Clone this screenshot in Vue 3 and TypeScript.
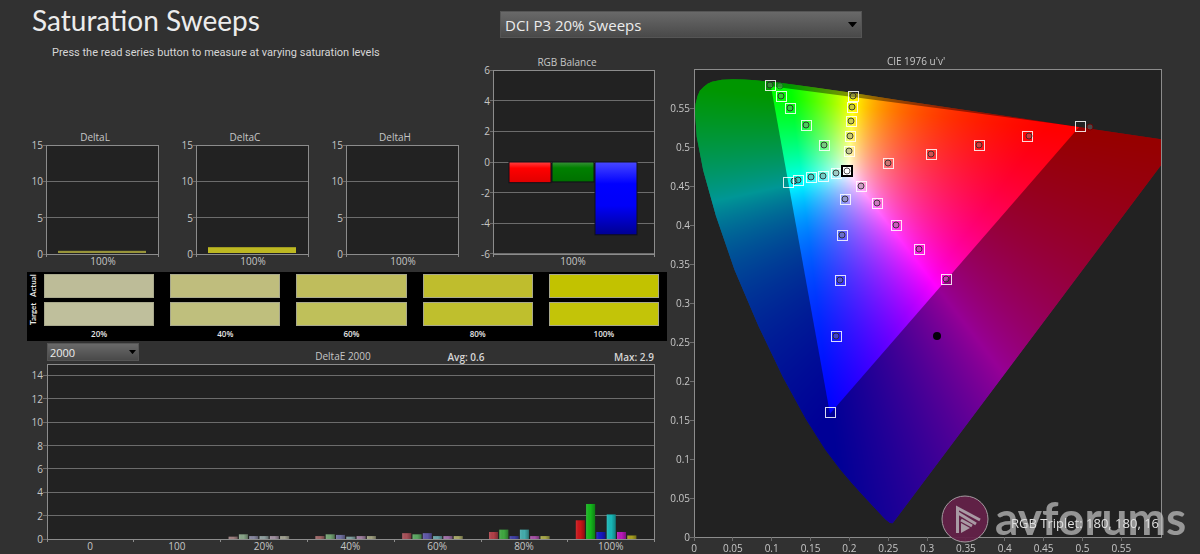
<script setup lang="ts">
import { onMounted, ref } from 'vue'

interface Swatch { label: string; actual: string; target: string }
interface Delta { title: string; value: number; fill: string }
interface Marker { x: number; y: number; square?: boolean; circle?: boolean; dx?: number; tint?: string }

const sweep = ref('DCI P3 20% Sweeps')
const formula = ref('2000')

const deltas: Delta[] = [
  { title: 'DeltaL', value: 0.3, fill: '#98943a' },
  { title: 'DeltaC', value: 0.8, fill: '#bdb822' },
  { title: 'DeltaH', value: 0, fill: '#bdb822' },
]
const deltaTicks = [15, 10, 5, 0]
const deltaY = (v: number) => 126 - v * 7.26

const rgbTicks = [6, 4, 2, 0, -2, -4, -6]
const rgbY = (v: number) => 118 - v * 15.33
const rgbBars = [
  { x: 33, value: -1.35, fill: 'url(#rgbRed)' },
  { x: 76, value: -1.3, fill: 'url(#rgbGreen)' },
  { x: 119, value: -4.75, fill: 'url(#rgbBlue)' },
]

const swatches: Swatch[] = [
  { label: '20%', actual: '#bdbc98', target: '#bfbf9c' },
  { label: '40%', actual: '#bfbd7d', target: '#bfbf7d' },
  { label: '60%', actual: '#bfbd5c', target: '#bfc05a' },
  { label: '80%', actual: '#bfbd2d', target: '#bfbf2d' },
  { label: '100%', actual: '#c2c200', target: '#c3c408' },
]

const errTicks = [14, 12, 10, 8, 6, 4, 2, 0]
const errY = (v: number) => 176 - v * 11.68
const groupWidth = 86.8
const groups = [
  { label: '0', bars: [], colors: [] },
  { label: '100', bars: [], colors: [] },
  { label: '20%', bars: [0.2, 0.4, 0.25, 0.25, 0.25, 0.25], colors: ['#a08080', '#88a488', '#8888a0', '#90a0a0', '#a090a0', '#a0a090'] },
  { label: '40%', bars: [0.25, 0.4, 0.35, 0.2, 0.25, 0.25], colors: ['#a06868', '#74a474', '#7070a0', '#80a0a0', '#a080a0', '#a0a080'] },
  { label: '60%', bars: [0.5, 0.4, 0.5, 0.25, 0.25, 0.25], colors: ['#a85058', '#5ca862', '#6058a8', '#6aa4a8', '#a070a8', '#a8a868'] },
  { label: '80%', bars: [0.6, 0.8, 0.25, 0.8, 0.25, 0.25], colors: ['#b04048', '#40a840', '#4040a8', '#44acac', '#a850a8', '#a8a848'] },
  { label: '100%', bars: [1.6, 3, 0.6, 2.1, 0.6, 0.3], colors: ['#cc1418', '#14b81c', '#1818c4', '#18b8b8', '#b818b8', '#a8a020'] },
]

const originX = 26
const originY = 493
const scaleU = 777
const scaleV = 780
const uTicks = ['0', '0.05', '0.1', '0.15', '0.2', '0.25', '0.3', '0.35', '0.4', '0.45', '0.5', '0.55']

const locus: [number, number][] = [
  [0.2557, 0.0175], [0.2522, 0.0178], [0.2461, 0.0226], [0.2347, 0.035], [0.2161, 0.0549],
  [0.2033, 0.0688], [0.1877, 0.0871], [0.169, 0.1119], [0.1441, 0.151], [0.1147, 0.2044],
  [0.0828, 0.2708], [0.0521, 0.3427], [0.0282, 0.4117], [0.0119, 0.4698], [0.0035, 0.5131],
  [0.0014, 0.5432], [0.002, 0.555], [0.0046, 0.5655], [0.0075, 0.572], [0.0123, 0.577],
  [0.0175, 0.581], [0.0231, 0.5837], [0.036, 0.5861],
  [0.0501, 0.5868], [0.0643, 0.5865], [0.0792, 0.5856], [0.1127, 0.5821], [0.1531, 0.5766],
  [0.2026, 0.5694], [0.2623, 0.5604], [0.3315, 0.5501], [0.4035, 0.5393], [0.4691, 0.5296],
  [0.5203, 0.5219], [0.6234, 0.5065],
]
const gamut: [number, number][] = [[0.099, 0.578], [0.496, 0.526], [0.175, 0.158]]

const markers: Marker[] = [
  { x: 102, y: 41, square: true, circle: true },
  { x: 112, y: 42, circle: true, tint: '#0a7a1a' },
  { x: 113, y: 52, square: true, circle: true },
  { x: 122, y: 64, square: true, circle: true },
  { x: 138, y: 81, square: true, circle: true },
  { x: 156, y: 101, square: true, circle: true },
  { x: 185, y: 52, square: true, circle: true },
  { x: 184, y: 63, square: true, circle: true },
  { x: 183, y: 77, square: true, circle: true },
  { x: 182, y: 92, square: true, circle: true },
  { x: 181, y: 107, square: true, circle: true },
  { x: 120, y: 138, square: true },
  { x: 126, y: 137, circle: true },
  { x: 130, y: 136, square: true, circle: true },
  { x: 143, y: 133, square: true, circle: true },
  { x: 155, y: 132, square: true, circle: true },
  { x: 168, y: 129, square: true, circle: true },
  { x: 220, y: 119, square: true, circle: true },
  { x: 263, y: 110, square: true, circle: true },
  { x: 311, y: 101, square: true, circle: true },
  { x: 359, y: 92, square: true, circle: true, dx: 2 },
  { x: 412, y: 82, square: true },
  { x: 422, y: 83, circle: true, tint: '#700000' },
  { x: 193, y: 142, square: true, circle: true },
  { x: 209, y: 159, square: true, circle: true },
  { x: 228, y: 181, square: true, circle: true },
  { x: 251, y: 205, square: true, circle: true },
  { x: 278, y: 235, square: true, circle: true },
  { x: 177, y: 155, square: true, circle: true },
  { x: 174, y: 191, square: true, circle: true },
  { x: 172, y: 236, square: true, circle: true },
  { x: 168, y: 292, square: true, circle: true },
  { x: 162, y: 368, square: true },
]

const diagram = ref<HTMLCanvasElement | null>(null)

function trace(ctx: CanvasRenderingContext2D, points: [number, number][]) {
  ctx.beginPath()
  for (const [u, v] of points) ctx.lineTo(originX + u * scaleU, originY - v * scaleV)
  ctx.closePath()
}

// Chromaticity to display colour, brightest channel scaled to full.
function colorAt(u: number, v: number): number[] {
  const x = (9 * u) / (6 * u - 16 * v + 12)
  const y = (4 * v) / (6 * u - 16 * v + 12)
  const z = 1 - x - y
  const rgb = [
    3.2406 * x - 1.5372 * y - 0.4986 * z,
    -0.9689 * x + 1.8758 * y + 0.0415 * z,
    0.0557 * x - 0.204 * y + 1.057 * z,
  ].map((c) => Math.max(0, c))
  const peak = Math.max(...rgb)
  return rgb.map((c) => (255 * c) / peak)
}

onMounted(() => {
  const canvas = diagram.value
  const ctx = canvas?.getContext('2d')
  if (!canvas || !ctx) return
  const { width, height } = canvas
  const layer = document.createElement('canvas')
  layer.width = width
  layer.height = height
  const layerCtx = layer.getContext('2d')!
  const image = layerCtx.createImageData(width, height)
  for (let py = 0; py < height; py++) {
    for (let px = 0; px < width; px++) {
      const c = colorAt((px - originX) / scaleU, (originY - py) / scaleV)
      const i = (py * width + px) * 4
      image.data[i] = c[0]
      image.data[i + 1] = c[1]
      image.data[i + 2] = c[2]
      image.data[i + 3] = 255
    }
  }
  layerCtx.putImageData(image, 0, 0)

  ctx.fillStyle = '#222'
  ctx.fillRect(originX, 25, 467, 468)
  ctx.beginPath()
  ctx.rect(originX, 25, 467, 468)
  ctx.clip()
  ctx.save()
  trace(ctx, locus)
  ctx.clip()
  ctx.drawImage(layer, 0, 0)
  ctx.fillStyle = 'rgba(0, 0, 0, 0.41)'
  ctx.fillRect(0, 0, width, height)
  trace(ctx, gamut)
  ctx.clip()
  ctx.drawImage(layer, 0, 0)
  ctx.restore()
})
</script>

<template>
  <main class="page">
    <h1>Saturation Sweeps</h1>

    <div class="sweep">
      <label class="picker">
        <select v-model="sweep" aria-label="Sweep series">
          <option>DCI P3 20% Sweeps</option>
        </select>
        <svg class="arrow" viewBox="0 0 10 6" aria-hidden="true"><path d="M0 0H10L5 6Z" /></svg>
      </label>
    </div>

    <section class="deltas">
      <p>Press the read series button to measure at varying saturation levels</p>
      <div class="delta-row">
        <svg v-for="d in deltas" :key="d.title" viewBox="0 0 150 144" role="img" :aria-label="d.title">
          <rect class="plot" x="20" y="17" width="112" height="109" />
          <g class="lines">
            <line v-for="t in deltaTicks" :key="t" x1="17" x2="132" :y1="deltaY(t)" :y2="deltaY(t)" />
            <path class="frame" d="M20 17V129M132 17V129M20 17H133M20 126H133" />
          </g>
          <rect v-if="d.value" x="32" width="88" :y="deltaY(d.value) - 1" :height="d.value * 7.26" :fill="d.fill" />
          <text x="69" y="13" class="mid">{{ d.title }}</text>
          <text v-for="t in deltaTicks" :key="t" x="17" :y="deltaY(t) + 4" class="end">{{ t }}</text>
          <text x="77" y="137" class="mid">100%</text>
        </svg>
      </div>
    </section>

    <svg class="balance" viewBox="0 0 192 228" role="img" aria-label="RGB Balance">
      <defs>
        <linearGradient id="rgbRed" x2="0" y2="1">
          <stop offset="0" stop-color="#ff4040" /><stop offset=".3" stop-color="#ff0000" /><stop offset="1" stop-color="#e00000" />
        </linearGradient>
        <linearGradient id="rgbGreen" x2="0" y2="1">
          <stop offset="0" stop-color="#389038" /><stop offset=".3" stop-color="#008000" /><stop offset="1" stop-color="#007000" />
        </linearGradient>
        <linearGradient id="rgbBlue" x2="0" y2="1">
          <stop offset="0" stop-color="#4848ff" /><stop offset=".3" stop-color="#0000ff" /><stop offset=".6" stop-color="#0000f8" /><stop offset="1" stop-color="#000090" />
        </linearGradient>
      </defs>
      <rect class="plot" x="17" y="26" width="161" height="184" />
      <g class="lines">
        <line v-for="t in rgbTicks" :key="t" x1="14" x2="178" :y1="rgbY(t)" :y2="rgbY(t)" />
        <path class="frame" d="M17 26V213M178 26V213M17 26H179M17 210H179" />
      </g>
      <rect v-for="b in rgbBars" :key="b.x" :x="b.x" y="118" width="42" :height="-b.value * 15.33" :fill="b.fill" stroke="#101018" />
      <text x="91" y="22" class="mid">RGB Balance</text>
      <text v-for="t in rgbTicks" :key="t" x="14" :y="rgbY(t) + 4" class="end">{{ t }}</text>
      <text x="97" y="221" class="mid">100%</text>
    </svg>

    <section class="swatches">
      <span class="side">Actual</span>
      <div v-for="s in swatches" :key="'a' + s.label" class="chip" :style="{ background: s.actual }"></div>
      <span class="side">Target</span>
      <div v-for="s in swatches" :key="'t' + s.label" class="chip" :style="{ background: s.target }"></div>
      <span></span>
      <span v-for="s in swatches" :key="'l' + s.label" class="percent">{{ s.label }}</span>
    </section>

    <section class="errors">
      <div class="error-head">
        <label class="picker small">
          <select v-model="formula" aria-label="DeltaE formula">
            <option>2000</option>
          </select>
          <svg class="arrow" viewBox="0 0 10 6" aria-hidden="true"><path d="M0 0H10L5 6Z" /></svg>
        </label>
        <span class="name">DeltaE 2000</span>
        <span class="stat">Avg: 0.6</span>
        <span class="stat last">Max: 2.9</span>
      </div>
      <svg viewBox="0 0 668 191" role="img" aria-label="DeltaE 2000">
        <defs>
          <linearGradient id="sheen">
            <stop offset="0" stop-color="#fff" stop-opacity=".12" /><stop offset=".5" stop-opacity="0" /><stop offset="1" stop-opacity=".3" />
          </linearGradient>
        </defs>
        <rect class="plot" x="47" y="1" width="607" height="175" />
        <g class="lines">
          <line v-for="t in errTicks" :key="t" x1="43" x2="654" :y1="errY(t)" :y2="errY(t)" />
          <path class="frame" d="M47 1V179M654 1V179M47 1H655M47 176H655" />
          <line v-for="i in 6" :key="'g' + i" :x1="47 + i * groupWidth" :x2="47 + i * groupWidth" y1="176" y2="179" class="frame" />
        </g>
        <g v-for="(g, gi) in groups" :key="g.label">
          <template v-for="(b, bi) in g.bars" :key="bi">
            <rect :x="55 + gi * groupWidth + bi * 10.3" :y="errY(b)" width="9" :height="b * 11.68" :fill="g.colors[bi]" />
            <rect :x="55 + gi * groupWidth + bi * 10.3" :y="errY(b)" width="9" :height="b * 11.68" fill="url(#sheen)" />
          </template>
          <text :x="90 + gi * groupWidth" y="187" class="mid">{{ g.label }}</text>
        </g>
        <text v-for="t in errTicks" :key="t" x="43" :y="errY(t) + 4" class="end">{{ t }}</text>
      </svg>
    </section>

    <section class="cie">
      <canvas ref="diagram" width="532" height="510"></canvas>
      <svg viewBox="0 0 532 510" role="img" aria-label="CIE 1976 u'v'">
        <g class="lines">
          <path class="frame" d="M26 25V496M493 25V493M26 25H494M26 493H494" />
          <template v-for="(t, i) in uTicks" :key="t">
            <line :x1="originX + i * 38.85" :x2="originX + i * 38.85" y1="493" y2="497" />
            <line x1="22" x2="26" :y1="originY - i * 39" :y2="originY - i * 39" />
          </template>
        </g>
        <text x="248" y="21" class="mid">CIE 1976 u'v'</text>
        <template v-for="(t, i) in uTicks" :key="t">
          <text :x="originX + i * 38.85" y="508" class="mid">{{ t }}</text>
          <text x="22" :y="originY + 4 - i * 39" class="end">{{ t }}</text>
        </template>
        <g v-for="(m, i) in markers" :key="i">
          <rect v-if="m.square" class="target" :x="m.x - 5" :y="m.y - 5" width="10" height="10" />
          <circle v-if="m.circle" class="reading" :cx="m.x + (m.dx ?? 0)" :cy="m.y" r="3" :style="m.tint ? { stroke: m.tint } : {}" />
        </g>
        <rect x="174" y="122" width="10" height="10" fill="#ffffff" stroke="#000" stroke-width="2" />
        <circle cx="179" cy="127" r="3" fill="#fff" stroke="#555" />
        <circle cx="269" cy="292" r="4" fill="#050008" />

        <circle cx="297" cy="475" r="23" fill="#642249" fill-opacity=".95" stroke="#a59aa0" />
        <g fill="none" stroke="#a99aa4" stroke-width="3">
          <path d="M289.500 489V464L312 476" />
          <path d="M290 469L308 480" />
          <path d="M293 476L304 482" />
        </g>
        <path d="M293 479L302 484L293 489Z" fill="#a99aa4" />
        <text x="327" y="491" class="brand">avforums</text>
        <text x="491" y="484" class="triplet">RGB Triplet: 180, 180, 16</text>
      </svg>
    </section>
  </main>
</template>

<style>
body {
  margin: 0;
  background: #313131;
}
</style>

<style scoped>
.page {
  display: grid;
  grid-template-columns: 476fr 192fr 532fr;
  grid-template-rows: 44px auto auto auto;
  overflow: hidden;
  background: #313131;
  color: #d6d6d6;
  font-family: "Open Sans", "Noto Sans", sans-serif;
  font-size: 11px;
}

svg,
canvas {
  display: block;
  width: 100%;
  height: auto;
}

h1 {
  margin: 0;
  padding: 2px 0 0 32px;
  color: #ececec;
  font-family: Lato, sans-serif;
  font-size: 28px;
  font-weight: 400;
  line-height: 36px;
}

.sweep {
  grid-column: 2 / 4;
  padding: 11px 0 0 24px;
}

.picker {
  position: relative;
  display: block;
  width: 50%;
  min-width: 362px;
  height: 27px;
}

.picker select {
  appearance: none;
  box-sizing: border-box;
  width: 100%;
  height: 100%;
  padding: 0 24px 0 4px;
  border: 1px solid #555;
  border-radius: 0;
  background: linear-gradient(#696969, #494949);
  color: #ececec;
  font: 15px "Open Sans", "Noto Sans", sans-serif;
}

.picker .arrow {
  position: absolute;
  top: 11px;
  right: 5px;
  width: 9px;
  fill: #000;
  pointer-events: none;
}

.deltas {
  display: flex;
  flex-direction: column;
  justify-content: space-between;
}

.deltas p {
  margin: 0 0 0 52px;
  font-family: Roboto, sans-serif;
  line-height: 18px;
}

.delta-row {
  display: grid;
  grid-template-columns: repeat(3, 1fr);
  padding-left: 26px;
}

.plot {
  fill: #222;
}

.lines {
  stroke: #6c6c6c;
  fill: none;
  shape-rendering: crispEdges;
}

.frame {
  stroke: #8c8c8c;
}

text {
  fill: #c6c6c6;
  font-size: 10px;
}

.mid {
  text-anchor: middle;
}

.end {
  text-anchor: end;
}

.swatches {
  grid-column: 1 / 3;
  display: grid;
  grid-template-columns: 1px repeat(5, 1fr);
  grid-template-rows: 24px 24px 8px;
  gap: 4px 16px;
  margin: 0 1px 0 27px;
  padding: 2px 8px 3px 0;
  background: #000;
  color: #e8e8e8;
}

.chip {
  box-sizing: border-box;
  border: 1px solid #a8a88c;
}

.side {
  justify-self: start;
  width: 12px;
  writing-mode: vertical-rl;
  transform: rotate(180deg);
  font-family: Lato, sans-serif;
  font-size: 8px;
  font-weight: 700;
  line-height: 12px;
  text-align: center;
  white-space: nowrap;
}

.percent {
  font-size: 8px;
  font-weight: 600;
  line-height: 8px;
  text-align: center;
}

.errors {
  grid-column: 1 / 3;
}

.error-head {
  display: grid;
  grid-template-columns: 242fr 108fr 138fr 119fr;
  align-items: end;
  height: 22px;
  padding: 0 14px 0 47px;
}

.small {
  align-self: center;
  width: 92px;
  min-width: 0;
  height: 18px;
}

.small select {
  padding: 0 16px 0 2px;
  font-size: 11px;
}

.small .arrow {
  top: 7px;
  right: 3px;
  width: 7px;
}

.name {
  color: #c6c6c6;
  font-size: 10px;
  line-height: 14px;
  text-align: center;
}

.stat {
  font-size: 10px;
  font-weight: 600;
  line-height: 12px;
  text-align: center;
}

.last {
  text-align: right;
}

.cie {
  grid-column: 3;
  grid-row: 2 / 5;
  display: grid;
  align-content: start;
}

.cie > * {
  grid-area: 1 / 1;
}

.target {
  fill: none;
  stroke: #ffffff;
  stroke-opacity: 0.85;
  shape-rendering: crispEdges;
}

.reading {
  fill: #808080;
  fill-opacity: 0.4;
  stroke: #282828;
  stroke-opacity: 0.85;
}

.triplet {
  fill: #e0e0e0;
  font-size: 13px;
  text-anchor: end;
}

.brand {
  fill: #c4c4c4;
  fill-opacity: 0.7;
  font-family: Lato, sans-serif;
  font-size: 46px;
  font-weight: 700;
}
</style>
